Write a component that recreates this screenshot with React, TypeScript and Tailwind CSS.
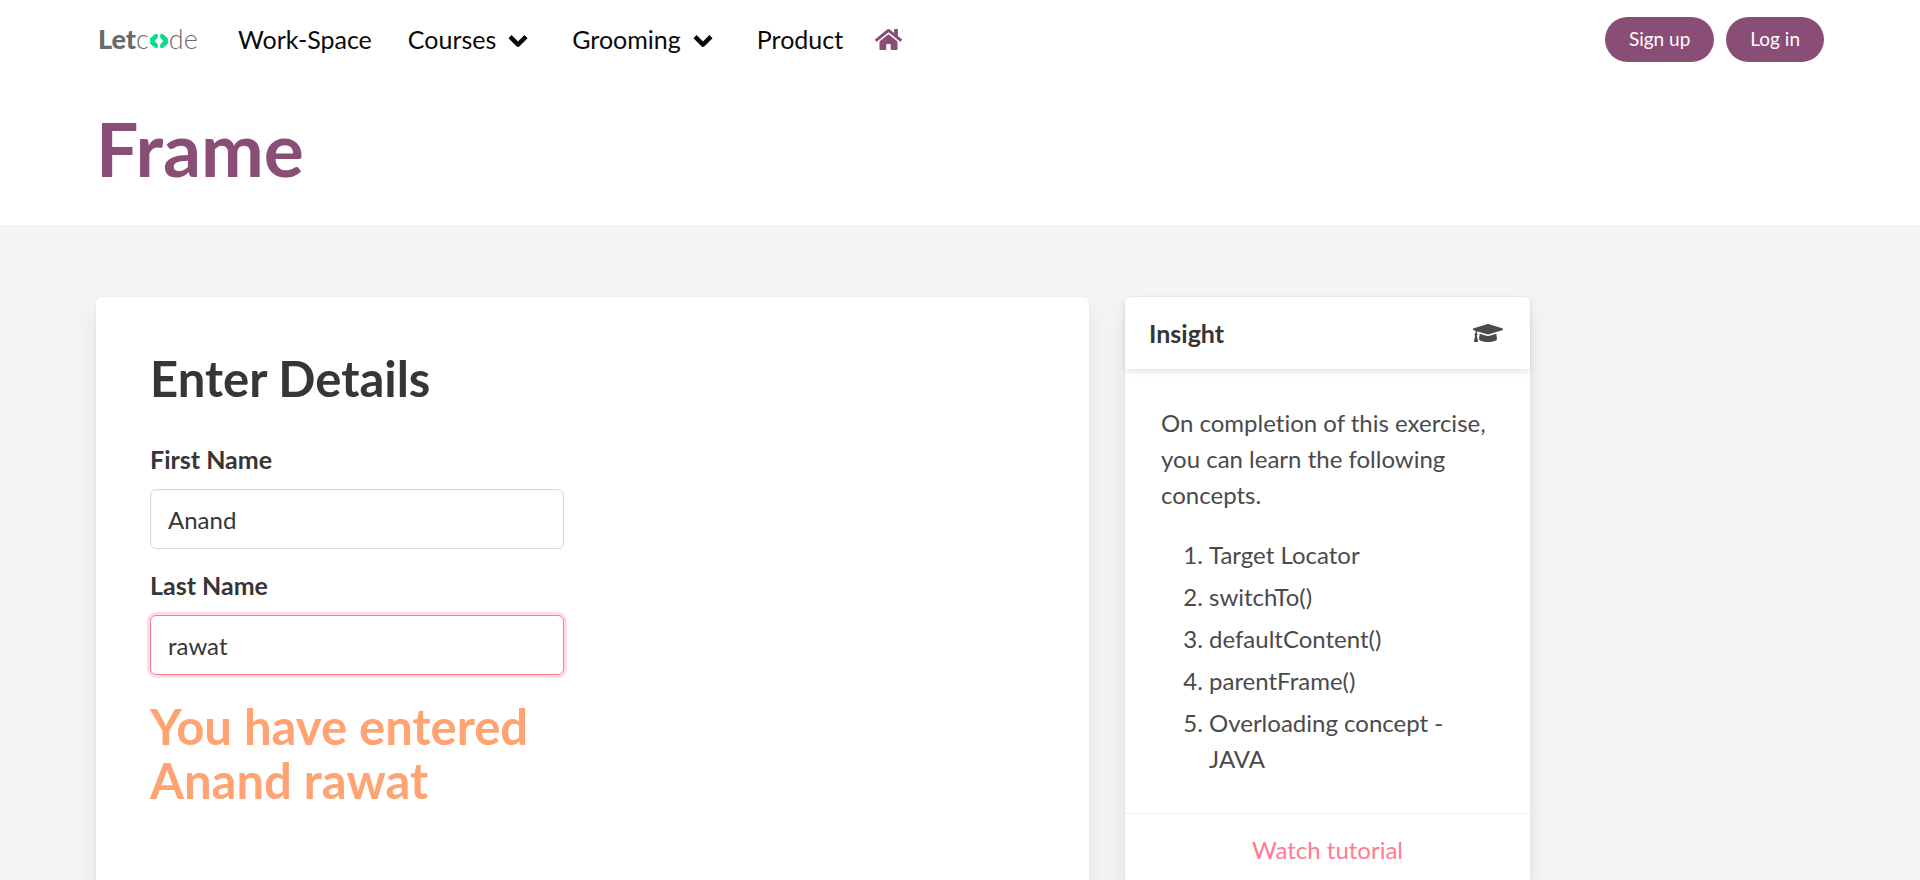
import { useState } from "react";
import { FaGraduationCap, FaHome } from "react-icons/fa";

const concepts = [
  "Target Locator",
  "switchTo()",
  "defaultContent()",
  "parentFrame()",
  "Overloading concept - JAVA",
];

const cardShadow = "shadow-[0_12px_24px_-3px_rgba(10,10,10,0.1),0_0_0_1px_rgba(10,10,10,0.02)]";

function Chevron() {
  return (
    <svg width="20" height="14" viewBox="0 0 20 14" fill="none" aria-hidden="true" className="mt-1">
      <path d="M2 2.6 L10 10.6 L18 2.6" stroke="#0a0a0a" strokeWidth="4.4" strokeLinejoin="round" strokeLinecap="butt" />
    </svg>
  );
}

function Logo() {
  return (
    <a href="#" className="flex w-[102px] items-center pl-[2px] text-[27px] text-[#6a6a6a]">
      <span className="font-black">Let</span>
      <span className="font-light">c</span>
      <svg width="20" height="16" viewBox="0 0 20 16" aria-hidden="true" className="mt-1 shrink-0">
        <path
          d="M8.4 1.4 V4.6 L5.4 8 L8.4 11.4 V14.6 H6 L1.4 10.4 V5.6 L6 1.4 Z M11.6 1.4 V4.6 L14.6 8 L11.6 11.4 V14.6 H14 L18.6 10.4 V5.6 L14 1.4 Z"
          fill="#08dc8b"
          stroke="#08dc8b"
          strokeWidth="0.8"
          strokeLinejoin="round"
        />
      </svg>
      <span className="font-light">de</span>
    </a>
  );
}

function Field({ id, label, value, focused, onChange }: {
  id: string; label: string; value: string; focused?: boolean; onChange: (v: string) => void;
}) {
  return (
    <div className="flex flex-col gap-3">
      <label htmlFor={id} className="text-[25px] font-bold text-[#363636]">{label}</label>
      <input
        id={id}
        type="text"
        value={value}
        onChange={(e) => onChange(e.target.value)}
        className={
          focused
            ? "h-[60px] w-full rounded-md border border-[#f97b92] bg-white px-[17px] text-[#363636] shadow-[0_0_0_3px_rgba(255,121,146,0.25)] outline-none"
            : "h-[60px] w-full rounded-md border border-[#dbdbdb] bg-white px-[17px] text-[#363636] shadow-[inset_0_1px_3px_rgba(10,10,10,0.05)] outline-none"
        }
      />
    </div>
  );
}

export default function App() {
  const [first, setFirst] = useState("Anand");
  const [last, setLast] = useState("rawat");

  return (
    <div className="min-h-screen bg-[#f4f4f4] font-[Lato,'Open_Sans',sans-serif] text-2xl leading-9 text-[#4a4a4a] [font-variant-ligatures:none]">
      <header className="bg-white px-24">
        <nav className="flex h-[78px] items-center justify-between text-[#0a0a0a]">
          <div className="flex items-center text-[25px]">
            <Logo />
            <a href="#" className="ml-10">Work-Space</a>
            <button type="button" className="ml-9 flex items-center gap-3">Courses <Chevron /></button>
            <button type="button" className="ml-11 flex items-center gap-3">Grooming <Chevron /></button>
            <a href="#" className="ml-11">Product</a>
            <a href="#" aria-label="Home" className="ml-8 text-[#8a4d76]"><FaHome size={27} /></a>
          </div>
          <div className="flex gap-3 text-[19px] text-white">
            <button type="button" className="h-[45px] rounded-full bg-[#8a4d76] px-6">Sign up</button>
            <button type="button" className="h-[45px] rounded-full bg-[#8a4d76] px-6">Log in</button>
          </div>
        </nav>
        <h1 className="pt-[30px] pb-9 text-[75px] leading-[81px] font-bold text-[#8a4d76]">Frame</h1>
      </header>

      <main className="grid grid-cols-12 items-start gap-9 px-24 py-18">
        <section className={`col-span-7 rounded-md bg-white p-[54px] pb-36 ${cardShadow}`}>
          <div className="w-full max-w-[414px]">
            <h2 className="mb-9 text-[49px] leading-[54px] font-bold text-[#363636]">Enter Details</h2>
            <div className="flex flex-col gap-[18px]">
              <Field id="first-name" label="First Name" value={first} onChange={setFirst} />
              <Field id="last-name" label="Last Name" value={last} focused onChange={setLast} />
            </div>
            <p className="mt-6 text-[49px] leading-[54px] font-bold text-[#ffa372]">You have entered {first} {last}</p>
          </div>
        </section>

        <aside className={`col-span-3 rounded-md bg-white ${cardShadow}`}>
          <header className="flex h-18 items-center justify-between pr-[27px] pl-6 shadow-[0_3px_6px_rgba(10,10,10,0.1)]">
            <h2 className="text-[25px] font-bold text-[#363636]">Insight</h2>
            <FaGraduationCap size={30} />
          </header>
          <div className="p-9">
            <p className="mb-6">On completion of this exercise, you can learn the following concepts.</p>
            <ol className="ml-12 flex list-decimal flex-col gap-[6px]">
              {concepts.map((c) => <li key={c}>{c}</li>)}
            </ol>
          </div>
          <footer className="border-t border-[#ededed] p-[18px] text-center">
            <a href="#" className="text-[#ff7b92]">Watch tutorial</a>
          </footer>
        </aside>
      </main>
    </div>
  );
}
